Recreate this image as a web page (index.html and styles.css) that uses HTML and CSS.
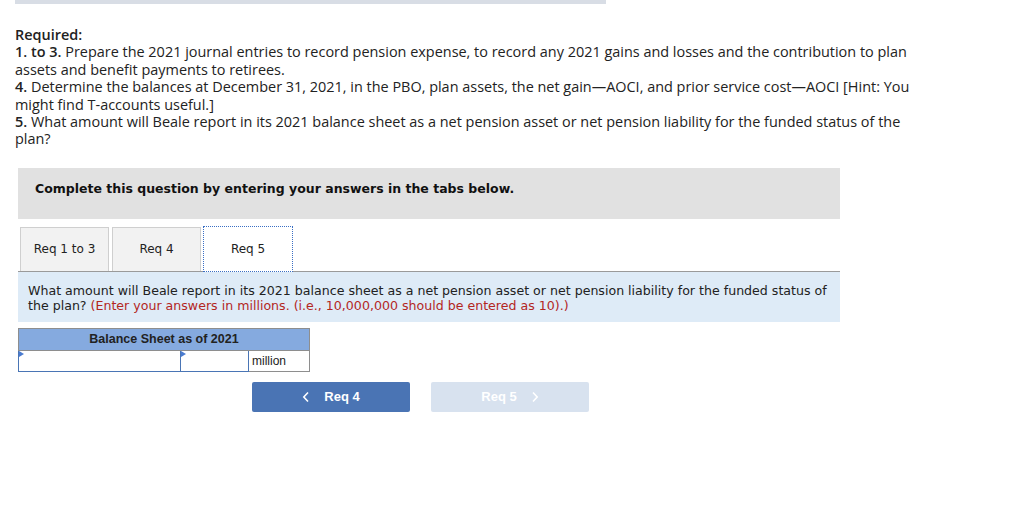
FILE: index.html
```html
<!DOCTYPE html>
<html>
<head>
<meta charset="utf-8">
<link rel="stylesheet" href="styles.css">
</head>
<body>
<div class="topbar"></div>
<div class="required">
  <p class="req-title">Required:</p>
  <p><b>1. to 3.</b> Prepare the 2021 journal entries to record pension expense, to record any 2021 gains and losses and the contribution to plan assets and benefit payments to retirees.</p>
  <p><b>4.</b> Determine the balances at December 31, 2021, in the PBO, plan assets, the net gain—AOCI, and prior service cost—AOCI [Hint: You might find T-accounts useful.]</p>
  <p><b>5.</b> What amount will Beale report in its 2021 balance sheet as a net pension asset or net pension liability for the funded status of the plan?</p>
</div>
<div class="panel">
  <div class="instructions">Complete this question by entering your answers in the tabs below.</div>
  <div class="tabs">
    <div class="tab">Req 1 to 3</div>
    <div class="tab">Req 4</div>
    <div class="tab active">Req 5</div>
  </div>
  <div class="question">What amount will Beale report in its 2021 balance sheet as a net pension asset or net pension liability for the funded status of the plan? <span class="red">(Enter your answers in millions. (i.e., 10,000,000 should be entered as 10).)</span></div>
  <table class="sheet">
    <tr><th colspan="3">Balance Sheet as of 2021</th></tr>
    <tr>
      <td class="in wide"><span class="flag"></span></td>
      <td class="in narrow"><span class="flag"></span></td>
      <td class="unit">million</td>
    </tr>
  </table>
  <div class="nav">
    <div class="btn prev"><svg class="chev" width="8" height="12" viewBox="0 0 8 12"><path d="M6 1.5 L1.8 6 L6 10.5" fill="none" stroke="#fff" stroke-width="1.6"/></svg>Req 4</div>
    <div class="btn next">Req 5<svg class="chev" width="8" height="12" viewBox="0 0 8 12"><path d="M2 1.5 L6.2 6 L2 10.5" fill="none" stroke="#fff" stroke-width="1.6"/></svg></div>
  </div>
</div>
</body>
</html>
```
FILE: styles.css
```css
html, body { margin: 0; padding: 0; background: #fff; }
body { width: 1024px; }
.topbar { margin-left: 15px; width: 591px; height: 4px; background: #d8dde5; }
.required { width: 902px; padding: 22px 0 0 15px; font-family: "Open Sans", "Lato", sans-serif; font-size: 14.45px; line-height: 17.4px; color: #222; }
.required p { margin: 0; }
.req-title { font-weight: 600; }
.required b { font-weight: 600; }
.panel { margin: 20px 0 0 18px; width: 822px; }
.instructions { background: #e1e1e1; height: 51px; box-sizing: border-box; padding: 13px 0 0 17px; font-family: "DejaVu Sans", Verdana, sans-serif; font-weight: bold; font-size: 12.5px; color: #111; }
.tabs { display: flex; gap: 3px; padding: 8px 0 0 2px; border-bottom: 1px solid #9a9a9a; }
.tab { width: 89px; height: 44px; box-sizing: border-box; border: 1px solid #cfcfcf; border-bottom: none; background: #f2f2f2; font-family: "DejaVu Sans", Verdana, sans-serif; font-size: 12px; color: #222; display: flex; align-items: center; justify-content: center; }
.tab.active { background: #fff; border: 1px dotted #3a6fc4; width: 90px; margin-left: -1px; height: 46px; margin-top: -1px; margin-bottom: -1px; }
.question { background: #deebf7; padding: 11px 10px 9px 10px; font-family: "DejaVu Sans", Verdana, sans-serif; font-size: 12.6px; line-height: 15px; color: #222; }
.red { color: #b3261e; }
.sheet { margin-top: 6px; border-collapse: collapse; border: 1px solid #8e8e8e; width: 292px; font-family: "Liberation Sans", Arial, sans-serif; font-size: 12px; }
.sheet th { background: #85aadf; height: 21px; padding: 0; font-weight: bold; font-size: 12.5px; color: #222; border-bottom: 1px solid #8e8e8e; }
.sheet td { height: 20px; padding: 0; position: relative; }
.sheet td.in { border: 1px solid #4a75b5; background: #fff; }
.sheet td.wide { width: 161px; }
.sheet td.narrow { width: 67px; }
.sheet td.unit { padding-left: 3px; color: #222; }
.flag { position: absolute; left: 0; top: 0; width: 0; height: 0; border-left: 5px solid #4a7bd0; border-top: 3px solid transparent; border-bottom: 3px solid transparent; }
.nav { display: flex; gap: 21px; margin: 10px 0 0 234px; }
.btn { width: 158px; height: 30px; border-radius: 2px; display: flex; align-items: center; justify-content: center; font-family: "Liberation Sans", Arial, sans-serif; font-weight: bold; font-size: 13px; color: #fff; }
.btn.prev { background: #4a74b4; }
.btn.next { background: #d8e2ef; }
.prev .chev { margin-right: 14px; }
.next .chev { margin-left: 14px; }
```
